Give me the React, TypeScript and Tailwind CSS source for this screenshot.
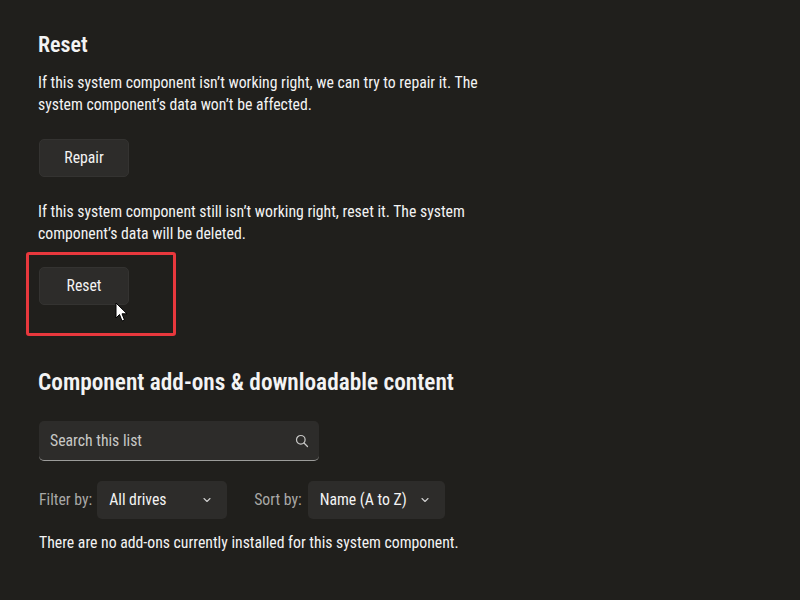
import React from "react";

const Chevron = () => (
  <svg width="12" height="12" viewBox="0 0 12 12" fill="none" stroke="#cfcfcf" strokeWidth="1.1" strokeLinecap="round" strokeLinejoin="round">
    <path d="M3 4.5 L6 7.5 L9 4.5" />
  </svg>
);

export default function App() {
  return (
    <div className="w-[800px] h-[600px] overflow-hidden bg-[#201f1c] text-[#f3f3f3] pl-[38px] pt-[31px] font-['Roboto_Condensed','Noto_Sans',sans-serif]">
      <h2 className="text-[22px] font-semibold leading-[28px]">Reset</h2>
      <p className="mt-[13px] text-[15.75px] leading-[22px] w-[455px]">
        If this system component isn’t working right, we can try to repair it. The system component’s data won’t be affected.
      </p>
      <button className="mt-[23px] ml-px w-[90px] h-[38px] rounded-[5px] bg-[#2d2c2a] border border-[#343331] text-[15.75px] text-[#f3f3f3]">
        Repair
      </button>
      <p className="mt-[24px] text-[15.75px] leading-[22px] w-[455px]">
        If this system component still isn’t working right, reset it. The system component’s data will be deleted.
      </p>
      <div className="relative mt-[7px] -ml-[12px] w-[150px] h-[84px] rounded-[3px] border-[3px] border-[#e8383d] pl-[10px] pt-[12px]">
        <button className="w-[90px] h-[38px] rounded-[5px] bg-[#2d2c2a] border border-[#343331] text-[15.75px] text-[#f3f3f3]">
          Reset
        </button>
        <svg className="absolute left-[86px] top-[47px]" width="14" height="21" viewBox="0 0 14 21">
          <path d="M1 1 L1 16 L4.5 12.5 L7 19 L9.5 18 L7 11.8 L12 11.8 Z" fill="#ffffff" stroke="#000000" strokeWidth="1" strokeLinejoin="round" />
        </svg>
      </div>
      <h2 className="mt-[32px] text-[23.3px] font-semibold leading-[28px]">Component add-ons &amp; downloadable content</h2>
      <div className="mt-[25px] ml-px w-[280px] h-[40px] rounded-[5px] bg-[#2d2c2a] border-b-[1.5px] border-b-[#9c9c9a] flex items-center justify-between pl-[11px] pr-[10px]">
        <span className="text-[15.75px] text-[#c8c8c6]">Search this list</span>
        <svg width="14" height="14" viewBox="0 0 14 14" fill="none" stroke="#c8c8c6" strokeWidth="1.2" strokeLinecap="round">
          <circle cx="5.8" cy="5.8" r="4.3" />
          <path d="M9 9 L12.5 12.5" />
        </svg>
      </div>
      <div className="mt-[20px] ml-px flex items-center h-[38px]">
        <span className="text-[15.75px] text-[#a8a8a6]">Filter by:</span>
        <div className="ml-[5px] w-[130px] h-[38px] rounded-[5px] bg-[#2d2c2a] flex items-center justify-between pl-[12px] pr-[14px]">
          <span className="text-[15.75px]">All drives</span>
          <Chevron />
        </div>
        <span className="ml-[27px] text-[15.75px] text-[#a8a8a6]">Sort by:</span>
        <div className="ml-[6px] w-[137px] h-[38px] rounded-[5px] bg-[#2d2c2a] flex items-center justify-between pl-[12px] pr-[14px]">
          <span className="text-[15.75px]">Name (A to Z)</span>
          <Chevron />
        </div>
      </div>
      <p className="mt-[13px] ml-px text-[15.75px] leading-[22px]">
        There are no add-ons currently installed for this system component.
      </p>
    </div>
  );
}
